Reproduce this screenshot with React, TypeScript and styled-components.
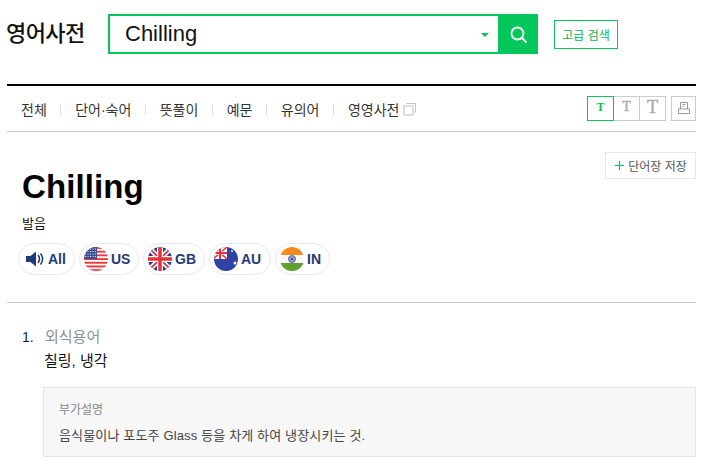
import React from "react";
import styled, { createGlobalStyle } from "styled-components";

const GlobalStyle = createGlobalStyle`
  html, body {
    margin: 0;
    padding: 0;
    background: #fff;
    overflow: hidden;
    font-family: "Liberation Sans", "Noto Sans CJK KR", sans-serif;
    color: #000;
  }
  * { box-sizing: border-box; }
`;

const Page = styled.div`
  width: 718px;
  height: 465px;
  overflow: hidden;
  padding-left: 7px;
`;

const Header = styled.header`
  display: flex;
  align-items: center;
  height: 84px;
  padding-bottom: 16px;
`;

const Logo = styled.h1`
  margin: 0 0 0 -1px;
  width: 102px;
  font-size: 22px;
  font-weight: 500;
  letter-spacing: -0.6px;
  line-height: 38px;
  color: #111;
  padding-bottom: 1px;
`;

const SearchForm = styled.div`
  display: flex;
  width: 430px;
  height: 40px;
`;

const SearchField = styled.div`
  flex: 1;
  display: flex;
  align-items: center;
  justify-content: space-between;
  border: 2px solid #03c75a;
  border-right: 0;
  padding: 0 9px 0 15px;
  font-size: 22px;
  color: #111;
`;

const Caret = styled.span`
  width: 0;
  height: 0;
  margin-top: 1px;
  border-left: 4px solid transparent;
  border-right: 4px solid transparent;
  border-top: 4px solid #03c75a;
`;

const SearchButton = styled.button`
  width: 40px;
  padding: 0;
  border: 0;
  background: #03c75a;
  display: flex;
  align-items: center;
  justify-content: center;
`;

const AdvancedButton = styled.button`
  width: 64px;
  height: 29px;
  margin-left: 16px;
  padding: 0;
  background: #fff;
  border: 1px solid #03c75a;
  color: #03b351;
  font-family: inherit;
  font-size: 12px;
`;

const Tabs = styled.nav`
  display: flex;
  align-items: center;
  justify-content: space-between;
  width: 689px;
  height: 48px;
  border-top: 2px solid #000;
  border-bottom: 1px solid #ccc;
  padding-top: 1px;
`;

const TabList = styled.div`
  display: flex;
  align-items: center;
  padding-left: 14px;
`;

const Tab = styled.span`
  display: flex;
  align-items: center;
  font-size: 14px;
  color: #333;

  & + &::before {
    content: "";
    width: 1px;
    height: 11px;
    background: #ddd;
    margin: 0 13.700px;
  }
`;

const ToolGroup = styled.div`
  display: flex;
  align-items: center;
  margin-bottom: 2px;
`;

const SizeButton = styled.button<{ $active?: boolean; $size: number }>`
  width: 27px;
  height: 25px;
  margin-left: -1px;
  padding: 0 0 2px;
  background: #fff;
  border: 1px solid ${(p) => (p.$active ? "#03c75a" : "#ccc")};
  color: ${(p) => (p.$active ? "#03c75a" : "#aaa")};
  font-family: "Liberation Serif", serif;
  font-weight: ${(p) => (p.$active ? "bold" : "normal")};
  -webkit-text-stroke: ${(p) => (p.$active ? "0" : "0.4px")};
  font-size: ${(p) => p.$size}px;
  line-height: 1;
  position: relative;
  z-index: ${(p) => (p.$active ? 1 : 0)};
`;

const PrintButton = styled.button`
  width: 25px;
  height: 25px;
  margin-left: 5px;
  padding: 0;
  background: #fff;
  border: 1px solid #ccc;
  display: flex;
  align-items: center;
  justify-content: center;
`;

const Entry = styled.section`
  width: 689px;
  height: 171px;
  border-bottom: 1px solid #ccc;
  padding: 35px 0 0 11px;
  position: relative;
`;

const SaveButton = styled.button`
  position: absolute;
  top: 20px;
  right: 0;
  width: 91px;
  height: 27px;
  padding: 0 0 0 1px;
  background: #fff;
  border: 1px solid #e8e8e8;
  display: flex;
  align-items: center;
  justify-content: center;
  gap: 4px;
  font-family: inherit;
  font-size: 12px;
  color: #555;
`;

const Word = styled.h2`
  margin: 0 0 0 4px;
  font-size: 33px;
  letter-spacing: 0.1px;
  font-weight: bold;
  line-height: 40px;
`;

const PronLabel = styled.div`
  margin: 7px 0 0 4px;
  font-size: 13px;
  line-height: 20px;
  color: #111;
`;

const Pills = styled.div`
  display: flex;
  gap: 4px;
  margin-top: 9px;
`;

const Pill = styled.button<{ $width: number }>`
  width: ${(p) => p.$width}px;
  height: 32px;
  padding: 0 0 0 3px;
  display: flex;
  align-items: center;
  gap: 2px;
  background: #fff;
  border: 1px solid #e9e9ee;
  border-radius: 16px;
  font-family: inherit;
  font-weight: bold;
  font-size: 14px;
  color: #1f3a7a;
`;

const Meaning = styled.div`
  display: grid;
  grid-template-columns: 36px 1fr;
  padding-top: 24px;
  width: 689px;
`;

const Num = styled.span`
  padding-left: 15px;
  font-size: 14px;
  line-height: 20px;
  color: #0a2a50;
`;

const Category = styled.div`
  padding-left: 2px;
  font-size: 15px;
  line-height: 20px;
  color: #8a8f98;
`;

const Translation = styled.div`
  margin-top: 4px;
  padding-left: 1px;
  font-size: 15px;
  line-height: 20px;
  color: #111;
`;

const Note = styled.div`
  grid-column: 2;
  height: 70px;
  margin-top: 16px;
  background: #f7f7f7;
  border: 1px solid #e4e4e4;
  padding: 13px 15px;
`;

const NoteTitle = styled.div`
  font-size: 12px;
  line-height: 18px;
  color: #888;
`;

const NoteBody = styled.div`
  margin-top: 8px;
  font-size: 13px;
  letter-spacing: 0.15px;
  line-height: 18px;
  color: #444;
`;

const FlagSvg = styled.svg`
  width: 26px;
  height: 26px;
  flex: none;
`;

const SearchIcon = () => (
  <svg width="18" height="20" viewBox="0 0 18 20" fill="none" stroke="#fff">
    <circle cx="8.500" cy="9.500" r="6" strokeWidth="1.800" />
    <path d="M13 14L17.500 18.500" strokeWidth="1.800" />
  </svg>
);

const CopyIcon = () => (
  <svg width="13" height="13" viewBox="0 0 13 13" fill="none" style={{ marginLeft: 4 }}>
    <path d="M3.500 .5h9v9" stroke="#c4c4c4" />
    <rect x="1" y="3" width="9" height="9" fill="#fff" stroke="#ddd" strokeWidth="2" />
  </svg>
);

const PrintIcon = () => (
  <svg width="12" height="12" viewBox="0 0 12 12" fill="none" stroke="#999">
    <path d="M2.500 7V.5h7V7" />
    <rect x=".5" y="7" width="11" height="4.500" />
    <path d="M4.500 2.500h3M4.500 4.500h1.500" />
  </svg>
);

const Plus = () => (
  <svg width="9" height="9" viewBox="0 0 9 9" stroke="#00c35a" strokeWidth="1.200">
    <path d="M4.500 0v9M0 4.500h9" />
  </svg>
);

const SpeakerIcon = () => (
  <svg width="18" height="16" viewBox="0 0 18 16" fill="#1f3a7a" style={{ marginLeft: 4, marginRight: 2 }}>
    <path d="M0 5h4.500L10 .5v15L4.500 11H0z" />
    <path d="M12 4c1.800 2.400 1.800 5.600 0 8M14.500 2.500c2.500 3.300 2.500 7.700 0 11" fill="none" stroke="#1f3a7a" strokeWidth="1.500" />
  </svg>
);

const UsFlag = () => (
  <FlagSvg viewBox="0 0 26 26">
    <defs>
      <clipPath id="us"><circle cx="13" cy="13" r="12" /></clipPath>
    </defs>
    <g clipPath="url(#us)">
      <rect width="26" height="26" fill="#fff" />
      {[1, 4.700, 8.400, 12.100, 15.800, 19.500, 23.200].map((y) => (
        <rect key={y} y={y} width="26" height="1.900" fill="#e8383d" />
      ))}
      <rect y="1" width="14" height="12" fill="#3b4f95" />
      {[2.500, 5, 7.500, 10, 12.500].flatMap((x) =>
        [3, 5.500, 8, 10.500].map((y) => <circle key={`${x}-${y}`} cx={x} cy={y} r="0.600" fill="#fff" />)
      )}
    </g>
  </FlagSvg>
);

const GbFlag = () => (
  <FlagSvg viewBox="0 0 26 26">
    <defs>
      <clipPath id="gb"><circle cx="13" cy="13" r="12" /></clipPath>
    </defs>
    <g clipPath="url(#gb)">
      <rect width="26" height="26" fill="#2a4192" />
      <path d="M0 0L26 26M26 0L0 26" stroke="#fff" strokeWidth="5" />
      <path d="M0 0L26 26M26 0L0 26" stroke="#e8303a" strokeWidth="1.800" />
      <path d="M13 0v26M0 13h26" stroke="#fff" strokeWidth="6" />
      <path d="M13 0v26M0 13h26" stroke="#e8303a" strokeWidth="3.500" />
    </g>
  </FlagSvg>
);

const AuFlag = () => (
  <FlagSvg viewBox="0 0 26 26">
    <defs>
      <clipPath id="au"><circle cx="13" cy="13" r="12" /></clipPath>
    </defs>
    <g clipPath="url(#au)">
      <rect width="26" height="26" fill="#2f43a0" />
      <rect x="0" y="1" width="14" height="12" fill="#fff" />
      <path d="M0 1L14 13M14 1L0 13" stroke="#e8303a" strokeWidth="1.500" />
      <path d="M7 1v12M0 7h14" stroke="#fff" strokeWidth="3.600" />
      <path d="M7 1v12M0 7h14" stroke="#e8303a" strokeWidth="2.200" />
      <circle cx="19" cy="5" r="0.900" fill="#fff" />
      <circle cx="22" cy="17" r="1.500" fill="#fff" />
    </g>
  </FlagSvg>
);

const InFlag = () => (
  <FlagSvg viewBox="0 0 26 26">
    <defs>
      <clipPath id="in"><circle cx="13" cy="13" r="12" /></clipPath>
    </defs>
    <g clipPath="url(#in)">
      <rect width="26" height="9" y="0" fill="#f58a1f" />
      <rect width="26" height="8" y="9" fill="#f7f8fb" />
      <rect width="26" height="9" y="17" fill="#5f9e2f" />
      <circle cx="13" cy="13" r="3.500" fill="#9aa3d0" stroke="#3b4f95" strokeWidth="0.800" />
      <circle cx="13" cy="13" r="1.200" fill="#3b4f95" />
    </g>
  </FlagSvg>
);

const tabs = ["전체", "단어·숙어", "뜻풀이", "예문", "유의어"];

export default function App() {
  return (
    <Page>
      <GlobalStyle />
      <Header>
        <Logo>영어사전</Logo>
        <SearchForm>
          <SearchField>
            Chilling
            <Caret />
          </SearchField>
          <SearchButton aria-label="검색">
            <SearchIcon />
          </SearchButton>
        </SearchForm>
        <AdvancedButton>고급 검색</AdvancedButton>
      </Header>
      <Tabs>
        <TabList>
          {tabs.map((t) => (
            <Tab key={t}>{t}</Tab>
          ))}
          <Tab>
            영영사전
            <CopyIcon />
          </Tab>
        </TabList>
        <ToolGroup>
          <SizeButton $active $size={12}>T</SizeButton>
          <SizeButton $size={14}>T</SizeButton>
          <SizeButton $size={18}>T</SizeButton>
          <PrintButton aria-label="인쇄">
            <PrintIcon />
          </PrintButton>
        </ToolGroup>
      </Tabs>
      <Entry>
        <SaveButton>
          <Plus />
          단어장 저장
        </SaveButton>
        <Word>Chilling</Word>
        <PronLabel>발음</PronLabel>
        <Pills>
          <Pill $width={57}><SpeakerIcon />All</Pill>
          <Pill $width={60}><UsFlag />US</Pill>
          <Pill $width={62}><GbFlag />GB</Pill>
          <Pill $width={62}><AuFlag />AU</Pill>
          <Pill $width={55}><InFlag />IN</Pill>
        </Pills>
      </Entry>
      <Meaning>
        <Num>1.</Num>
        <div>
          <Category>외식용어</Category>
          <Translation>칠링, 냉각</Translation>
        </div>
        <Note>
          <NoteTitle>부가설명</NoteTitle>
          <NoteBody>음식물이나 포도주 Glass 등을 차게 하여 냉장시키는 것.</NoteBody>
        </Note>
      </Meaning>
    </Page>
  );
}
